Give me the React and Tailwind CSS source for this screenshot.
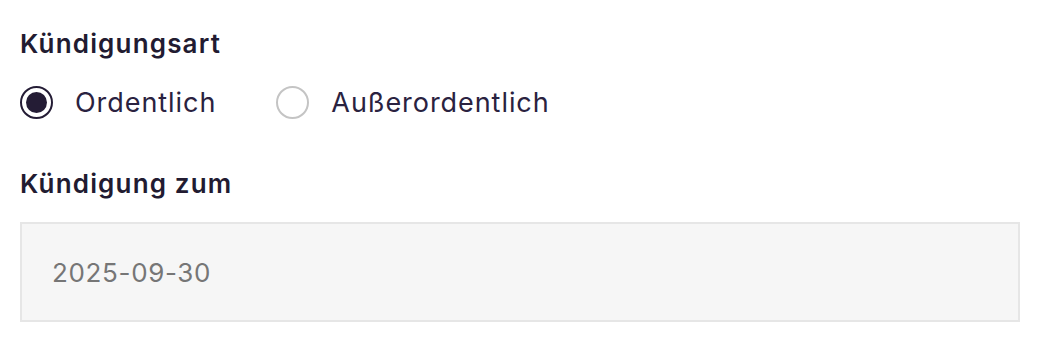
import { useState } from 'react';

const OPTIONS = [
  { value: 'ordentlich', label: 'Ordentlich' },
  { value: 'ausserordentlich', label: 'Außerordentlich' }
];

const Radio = ({ checked, label, onChange }) => (
  <label className="flex items-center gap-[22px] cursor-pointer">
    <span
      className={`flex h-[33px] w-[33px] items-center justify-center rounded-full ${
        checked ? 'border-[2.5px] border-[#241c35]' : 'border-2 border-[#c4c4c4]'
      }`}
    >
      {checked && <span className="h-[21px] w-[21px] rounded-full bg-[#241c35]" />}
    </span>
    <input type="radio" className="hidden" checked={checked} onChange={onChange} />
    <span className="text-[27px] leading-8 tracking-[0.035em] text-[#2a2240]">{label}</span>
  </label>
);

export default function App() {
  const [art, setArt] = useState('ordentlich');

  return (
    <div className="h-[350px] w-[1044px] bg-white px-5 pt-7 font-['Inter',sans-serif]">
      <div className="text-[26px] font-semibold leading-8 tracking-[0.045em] text-[#221b31]">Kündigungsart</div>

      <div className="mt-[26px] flex gap-[60px]">
        {OPTIONS.map((opt) => (
          <Radio
            key={opt.value}
            label={opt.label}
            checked={art === opt.value}
            onChange={() => setArt(opt.value)}
          />
        ))}
      </div>

      <div className="mt-[49px] text-[26px] font-semibold leading-8 tracking-[0.045em] text-[#221b31]">Kündigung zum</div>

      <div className="mt-[22px] flex h-[100px] w-[1000px] items-center border-2 border-[#e6e6e6] bg-[#f6f6f6] pl-[30px]">
        <span className="text-[26px] tracking-[0.025em] text-[#767676]">2025-09-30</span>
      </div>
    </div>
  );
}
